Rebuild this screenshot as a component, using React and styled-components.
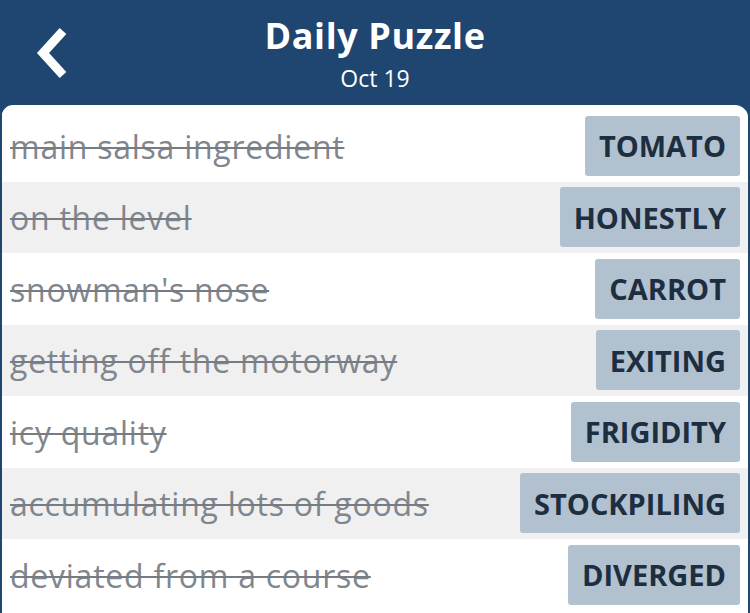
import React from "react";
import styled, { createGlobalStyle } from "styled-components";

const clues = [
  { clue: "main salsa ingredient", answer: "TOMATO" },
  { clue: "on the level", answer: "HONESTLY" },
  { clue: "snowman's nose", answer: "CARROT" },
  { clue: "getting off the motorway", answer: "EXITING" },
  { clue: "icy quality", answer: "FRIGIDITY" },
  { clue: "accumulating lots of goods", answer: "STOCKPILING" },
  { clue: "deviated from a course", answer: "DIVERGED" },
];

const GlobalStyle = createGlobalStyle`
  html, body {
    margin: 0;
    padding: 0;
    background: #1f4571;
    font-family: "Open Sans", Lato, sans-serif;
  }
`;

const Page = styled.div`
  width: 750px;
  height: 613px;
  overflow: hidden;
  display: flex;
  flex-direction: column;
  background: #1f4571;
`;

const Header = styled.header`
  position: relative;
  height: 105px;
  display: flex;
  flex-direction: column;
  align-items: center;
  color: #fff;
  flex-shrink: 0;
`;

const Title = styled.h1`
  margin: 12px 0 0;
  font-size: 36px;
  font-weight: 700;
  line-height: 48px;
  letter-spacing: 0.6px;
`;

const Subtitle = styled.div`
  margin-top: 5px;
  font-size: 23px;
  line-height: 26px;
`;

const BackButton = styled.button`
  position: absolute;
  left: 30px;
  top: 22px;
  width: 48px;
  height: 62px;
  padding: 0;
  border: none;
  background: none;
  cursor: pointer;

  svg {
    display: block;
  }
`;

const Panel = styled.main`
  flex: 1;
  margin: 0 2px;
  padding-top: 5px;
  background: #fff;
  border-radius: 11px 13px 0 0;
  overflow: hidden;
`;

const Row = styled.div`
  height: 71.5px;
  display: flex;
  align-items: center;
  justify-content: space-between;
  padding: 0 8px 0 8px;
  background: ${(p) => (p.$shaded ? "#f0f0f0" : "#fff")};
`;

const Clue = styled.span`
  font-size: 32px;
  letter-spacing: 0.75px;
  color: #80868d;
  text-decoration: line-through;
  text-decoration-thickness: 2px;
  text-decoration-color: #767c84;
  white-space: nowrap;
  margin-top: 1px;
`;

const Answer = styled.span`
  height: 60px;
  display: flex;
  align-items: center;
  padding: 0 14px;
  border-radius: 3px;
  background: #b1c1cf;
  color: #1d2e40;
  font-size: 29px;
  font-weight: 700;
`;

export default function App() {
  return (
    <>
      <GlobalStyle />
      <Page>
        <Header>
          <BackButton aria-label="back">
            <svg width="48" height="62" viewBox="0 0 48 62">
              <polyline
                points="33,9 13,31 33,53"
                fill="none"
                stroke="#fff"
                strokeWidth="9"
                strokeLinejoin="miter"
              />
            </svg>
          </BackButton>
          <Title>Daily Puzzle</Title>
          <Subtitle>Oct 19</Subtitle>
        </Header>
        <Panel>
          {clues.map((c, i) => (
            <Row key={c.answer} $shaded={i % 2 === 1}>
              <Clue>{c.clue}</Clue>
              <Answer>{c.answer}</Answer>
            </Row>
          ))}
        </Panel>
      </Page>
    </>
  );
}
